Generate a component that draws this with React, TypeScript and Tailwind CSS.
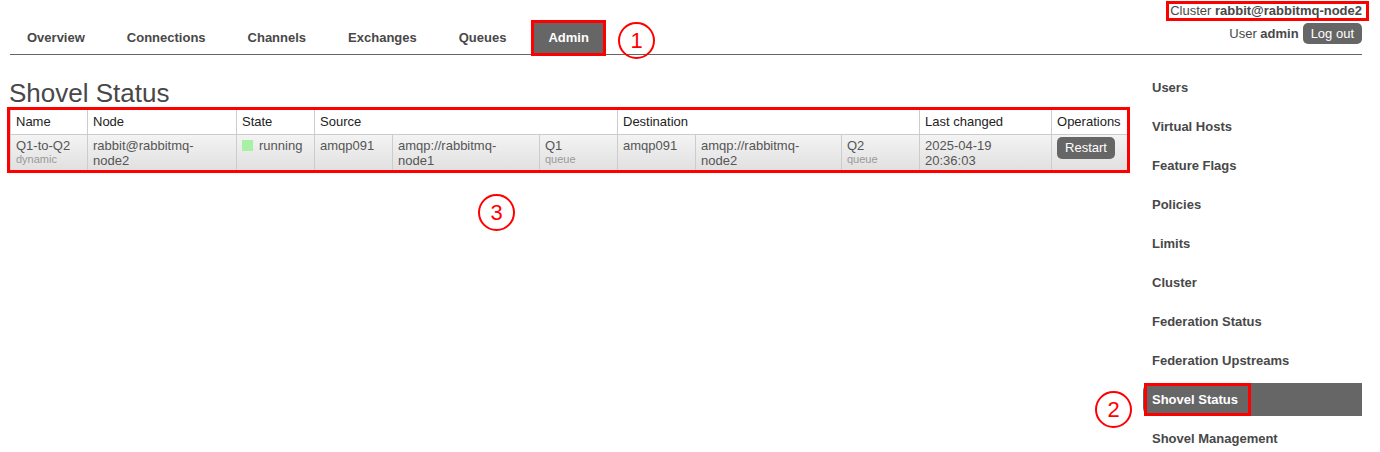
import React from 'react';

const tabs = ['Overview', 'Connections', 'Channels', 'Exchanges', 'Queues', 'Admin'];

const adminMenu = [
  'Users',
  'Virtual Hosts',
  'Feature Flags',
  'Policies',
  'Limits',
  'Cluster',
  'Federation Status',
  'Federation Upstreams',
  'Shovel Status',
  'Shovel Management',
];

// red numbered callouts drawn over the page
const Callout = ({ n, className }: { n: number; className: string }) => (
  <div
    className={`absolute w-[37px] h-[37px] rounded-full border-[2.5px] border-[#f00] flex items-center justify-center text-[#f00] text-[22px] leading-none ${className}`}
  >
    {n}
  </div>
);

const th = 'h-[25px] pl-[5px] pr-[6px] text-left font-normal text-[#222] whitespace-nowrap border-r border-b border-[#ccc] leading-[16px]';
const td = 'align-top pl-[5px] pr-[8px] pt-[3px] pb-[2px] leading-[15px] text-[#555] border-r border-[#ccc] bg-linear-to-b from-[#f3f3f3] to-[#e1e1e1]';

export default function App() {
  return (
    <div className="relative w-[1380px] h-[452px] overflow-hidden bg-white font-['Liberation_Sans',Arial,sans-serif] text-[13px] text-[#484848]">
      {/* Header */}
      <header className="ml-[10px] w-[1352px] h-[55px] border-b border-[#666] flex justify-between">
        <nav className="flex items-end gap-[12px] pl-[2px]">
          {tabs.map((t) => (
            <div
              key={t}
              className={`h-[32px] px-[15px] flex items-center font-bold ${
                t === 'Admin' ? 'bg-[#666] text-white outline-3 outline-[#f00] -outline-offset-1' : ''
              }`}
            >
              {t}
            </div>
          ))}
        </nav>
        <div className="flex flex-col items-end pt-[4px]">
          <span className="leading-[14px] pl-[1px] pr-[4px] -mr-[4px] outline-3 outline-[#f00]">
            Cluster <b>rabbit@rabbitmq-node2</b>
          </span>
          <div className="mt-[5px] flex items-center gap-[4px]">
            <span>
              User <b>admin</b>
            </span>
            <button className="h-[21px] px-[8px] rounded-[5px] bg-[#666] text-white leading-[21px]">Log out</button>
          </div>
        </div>
      </header>

      <div className="flex">
        {/* Main */}
        <main className="w-[1143px] pl-[8px] pt-[25px]">
          <h1 className="ml-[1px] text-[26px] leading-[26px] h-[26px]">Shovel Status</h1>
          <div className="mt-[1px] -ml-[1px] w-[1123px] border-[3px] border-[#f00]">
            <table className="w-[1117px] table-fixed border-separate border-spacing-0">
              <colgroup>
                <col className="w-[78px]" />
                <col className="w-[149px]" />
                <col className="w-[78px]" />
                <col className="w-[78px]" />
                <col className="w-[147px]" />
                <col className="w-[78px]" />
                <col className="w-[78px]" />
                <col className="w-[146px]" />
                <col className="w-[78px]" />
                <col className="w-[132px]" />
                <col className="w-[75px]" />
              </colgroup>
              <thead>
                <tr>
                  <th className={`${th} border-l`}>Name</th>
                  <th className={th}>Node</th>
                  <th className={th}>State</th>
                  <th className={th} colSpan={3}>Source</th>
                  <th className={th} colSpan={3}>Destination</th>
                  <th className={th}>Last changed</th>
                  <th className={`${th} border-r-0`}>Operations</th>
                </tr>
              </thead>
              <tbody>
                <tr>
                  <td className={`${td} border-l`}>
                    Q1-to-Q2
                    <span className="block text-[11px] leading-[12px] text-[#999]">dynamic</span>
                  </td>
                  <td className={td}>rabbit@rabbitmq-node2</td>
                  <td className={td}>
                    <span className="inline-block w-[11px] h-[11px] bg-[#a9f0a4] mr-[6px] align-[-1px]" />
                    running
                  </td>
                  <td className={td}>amqp091</td>
                  <td className={td}>amqp://rabbitmq-node1</td>
                  <td className={td}>
                    Q1
                    <span className="block text-[11px] leading-[12px] text-[#999]">queue</span>
                  </td>
                  <td className={td}>amqp091</td>
                  <td className={td}>amqp://rabbitmq-node2</td>
                  <td className={td}>
                    Q2
                    <span className="block text-[11px] leading-[12px] text-[#999]">queue</span>
                  </td>
                  <td className={td}>
                    <span className="block">2025-04-19</span>
                    <span className="block">20:36:03</span>
                  </td>
                  <td className={`${td} border-r-0`}>
                    <button className="-mt-[1px] h-[22px] px-[8px] rounded-[5px] bg-[#666] text-white leading-[22px]">
                      Restart
                    </button>
                  </td>
                </tr>
              </tbody>
            </table>
          </div>
        </main>

        {/* Admin sub menu */}
        <aside className="w-[219px] pt-[16px]">
          {adminMenu.map((item) => {
            const active = item === 'Shovel Status';
            return (
              <div
                key={item}
                className={`relative h-[33px] mb-[6px] pl-[9px] flex items-center font-bold ${
                  active ? 'bg-[#666] text-white rounded-l-[8px]' : ''
                }`}
              >
                {item}
                {active && <span className="absolute left-[1px] top-0 bottom-0 w-[107px] border-[3px] border-[#f00]" />}
              </div>
            );
          })}
        </aside>
      </div>

      <Callout n={1} className="left-[618px] top-[22px]" />
      <Callout n={3} className="left-[478px] top-[194px]" />
      <Callout n={2} className="left-[1095px] top-[391px]" />
    </div>
  );
}
